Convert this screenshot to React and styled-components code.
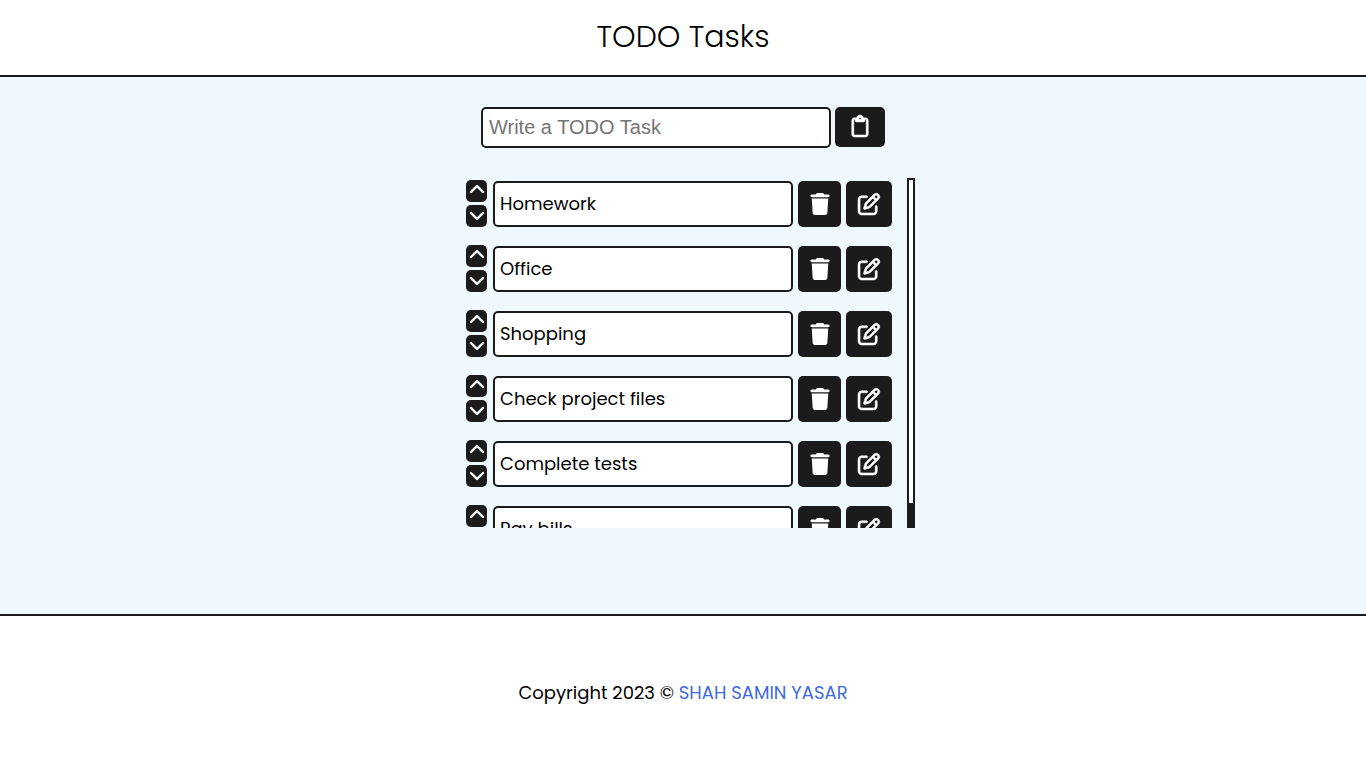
import React, { useLayoutEffect, useRef, useState } from "react";
import styled, { createGlobalStyle } from "styled-components";
import {
  FaChevronDown,
  FaChevronUp,
  FaRegClipboard,
  FaRegPenToSquare,
  FaTrash,
} from "react-icons/fa6";

const INK = "#1b1b1b";

const GlobalStyle = createGlobalStyle`
  *, *::before, *::after { box-sizing: border-box; }
  body {
    margin: 0;
    background: #fff;
    color: #000;
    font-family: Poppins, Inter, sans-serif;
    font-size: 18px;
  }
`;

const Page = styled.div`
  min-height: 100vh;
  display: flex;
  flex-direction: column;
`;

const Header = styled.header`
  padding: 14px 16px 16px;
  text-align: center;
`;

const Title = styled.h1`
  margin: 0;
  font-size: 30px;
  font-weight: 300;
  line-height: 45px;
`;

const Main = styled.main`
  display: flex;
  flex-direction: column;
  align-items: center;
  gap: 30px;
  padding: 30px 0 86px;
  background: aliceblue;
  border-top: 2px solid ${INK};
  border-bottom: 2px solid ${INK};
`;

const AddForm = styled.form`
  display: flex;
  align-items: flex-start;
  gap: 4px;
`;

const TextBox = styled.input`
  border: 2px solid ${INK};
  border-radius: 5px;
  background: #fff;
  color: #000;
  outline: none;
`;

const NewTaskInput = styled(TextBox)`
  width: 350px;
  height: 41px;
  padding: 0 6px;
  font-family: "Liberation Sans", Arial, sans-serif;
  font-size: 20px;

  &::placeholder {
    color: #757575;
    opacity: 1;
  }
`;

const TaskInput = styled(TextBox)`
  width: 300px;
  height: 46px;
  padding: 0 5px 2px;
  font-family: inherit;
  font-size: 18px;
`;

const IconButton = styled.button`
  display: inline-flex;
  align-items: center;
  justify-content: center;
  padding: 0;
  border: 0;
  border-radius: 5px;
  background: ${INK};
  color: #fff;
  font-size: 22px;
  cursor: pointer;

  svg {
    flex: none;
    overflow: visible;
    stroke-width: 12px;
  }
`;

const AddButton = styled(IconButton)`
  width: 50px;
  height: 40px;
  padding-bottom: 2px;
`;

const ArrowButton = styled(IconButton)`
  width: 21px;
  height: 22px;
  padding-bottom: 2px;
  font-size: 16px;
`;

const DeleteButton = styled(IconButton)`
  width: 43px;
  height: 46px;

  svg { stroke-width: 0; }
`;

const EditButton = styled(IconButton)`
  width: 46px;
  height: 46px;
`;

const ListFrame = styled.section`
  display: flex;
  gap: 15px;
  height: 350px;
  padding-left: 15px;
`;

const TaskList = styled.ul`
  display: flex;
  flex-direction: column;
  gap: 18px;
  margin: 0;
  padding: 2px 0 1px;
  list-style: none;
  overflow-y: auto;
  scrollbar-width: none;
`;

const TaskRow = styled.li`
  display: flex;
  flex: none;
  align-items: flex-end;
  gap: 5px;
`;

const Arrows = styled.div`
  display: flex;
  flex-direction: column;
  gap: 3px;
  margin-right: 1px;
`;

const Track = styled.div`
  width: 8px;
  background: ${INK};
`;

const Thumb = styled.div`
  border: 2px solid ${INK};
  background: #fff;
`;

const Footer = styled.footer`
  flex: 1;
  display: flex;
  align-items: center;
  justify-content: center;
  padding: 40px 16px;
`;

const Copyright = styled.p`
  margin: 0;
  line-height: 27px;
`;

const AuthorLink = styled.a`
  color: royalblue;
  text-decoration: none;
`;

const INITIAL = [
  "Homework",
  "Office",
  "Shopping",
  "Check project files",
  "Complete tests",
  "Pay bills",
].map((text, id) => ({ id, text }));

export default function App() {
  const [tasks, setTasks] = useState(INITIAL);
  const [draft, setDraft] = useState("");
  const [editing, setEditing] = useState(null);
  const [thumb, setThumb] = useState({ size: 100, offset: 0 });
  const listRef = useRef(null);
  const nextId = useRef(INITIAL.length);

  const measure = () => {
    const { clientHeight, scrollHeight, scrollTop } = listRef.current;
    setThumb({
      size: (clientHeight / scrollHeight) * 100,
      offset: (scrollTop / scrollHeight) * clientHeight,
    });
  };

  useLayoutEffect(measure, [tasks]);

  const add = (event) => {
    event.preventDefault();
    if (!draft.trim()) return;
    setTasks([...tasks, { id: nextId.current++, text: draft.trim() }]);
    setDraft("");
  };

  const move = (index, step) => {
    const target = index + step;
    if (target < 0 || target >= tasks.length) return;
    const next = [...tasks];
    [next[index], next[target]] = [next[target], next[index]];
    setTasks(next);
  };

  const rename = (id, text) =>
    setTasks(tasks.map((task) => (task.id === id ? { ...task, text } : task)));

  return (
    <Page>
      <GlobalStyle />
      <Header>
        <Title>TODO Tasks</Title>
      </Header>
      <Main>
        <AddForm onSubmit={add}>
          <NewTaskInput
            type="text"
            aria-label="New task"
            placeholder="Write a TODO Task"
            value={draft}
            onChange={(e) => setDraft(e.target.value)}
          />
          <AddButton type="submit" aria-label="Add task">
            <FaRegClipboard />
          </AddButton>
        </AddForm>
        <ListFrame aria-label="Tasks">
          <TaskList ref={listRef} onScroll={measure}>
            {tasks.map((task, index) => (
              <TaskRow key={task.id}>
                <Arrows>
                  <ArrowButton type="button" aria-label="Move up" onClick={() => move(index, -1)}>
                    <FaChevronUp />
                  </ArrowButton>
                  <ArrowButton type="button" aria-label="Move down" onClick={() => move(index, 1)}>
                    <FaChevronDown />
                  </ArrowButton>
                </Arrows>
                <TaskInput
                  type="text"
                  aria-label="Task"
                  value={task.text}
                  readOnly={editing !== task.id}
                  onChange={(e) => rename(task.id, e.target.value)}
                />
                <DeleteButton type="button" aria-label="Delete task" onClick={() => setTasks(tasks.filter((t) => t.id !== task.id))}>
                  <FaTrash />
                </DeleteButton>
                <EditButton type="button" aria-label="Edit task" onClick={() => setEditing(editing === task.id ? null : task.id)}>
                  <FaRegPenToSquare />
                </EditButton>
              </TaskRow>
            ))}
          </TaskList>
          <Track aria-hidden="true">
            <Thumb style={{ height: `${thumb.size}%`, transform: `translateY(${thumb.offset}px)` }} />
          </Track>
        </ListFrame>
      </Main>
      <Footer>
        <Copyright>
          Copyright 2023 © <AuthorLink href="#author">SHAH SAMIN YASAR</AuthorLink>
        </Copyright>
      </Footer>
    </Page>
  );
}
